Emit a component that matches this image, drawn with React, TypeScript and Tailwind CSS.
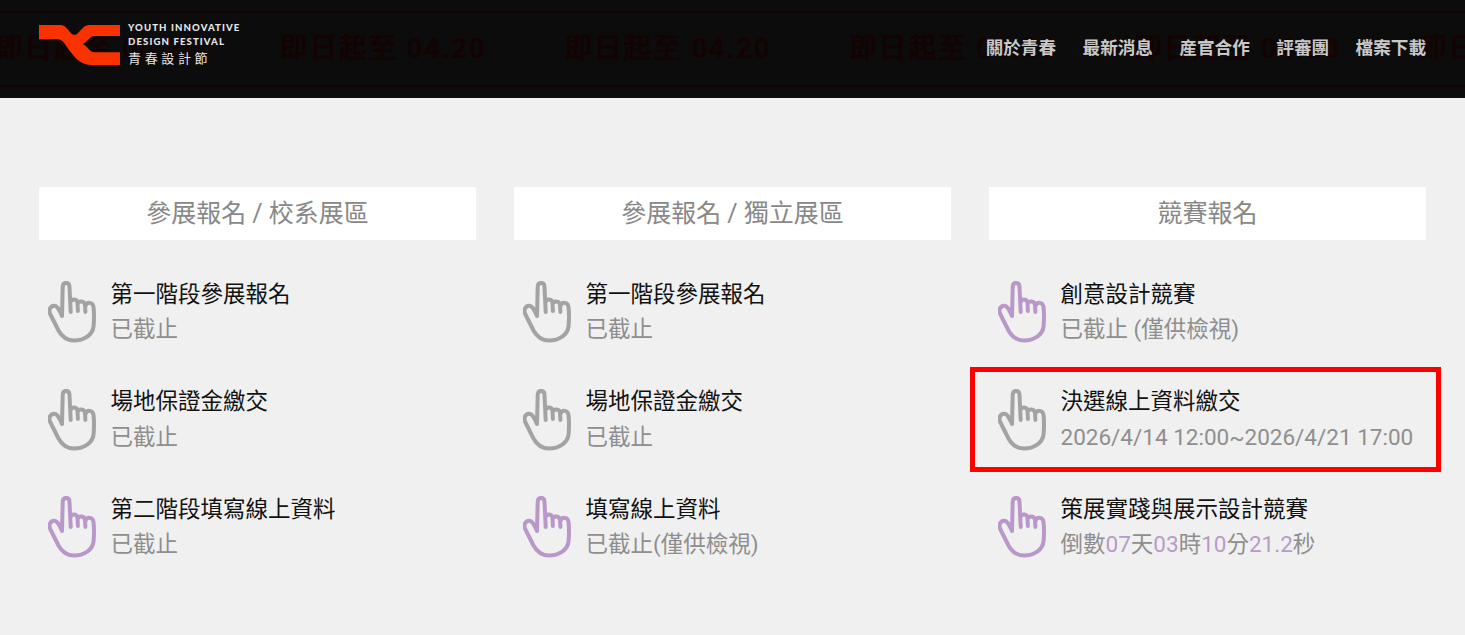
import type { ReactNode } from "react";

const FONT = "font-['Roboto','Noto_Sans_CJK_TC',sans-serif]";
const DEADLINE = "2026/4/14 12:00~2026/4/21 17:00";

const NAV_LINKS = ["關於青春", "最新消息", "産官合作", "評審團", "檔案下載"];

type Row = { title: string; sub: ReactNode; active?: boolean };

const Num = ({ children }: { children: ReactNode }) => (
  <span className="text-[#b79bc8]">{children}</span>
);

const COLUMNS: { heading: string; rows: Row[] }[] = [
  {
    heading: "參展報名 / 校系展區",
    rows: [
      { title: "第一階段參展報名", sub: "已截止" },
      { title: "場地保證金繳交", sub: "已截止" },
      { title: "第二階段填寫線上資料", sub: "已截止", active: true },
    ],
  },
  {
    heading: "參展報名 / 獨立展區",
    rows: [
      { title: "第一階段參展報名", sub: "已截止" },
      { title: "場地保證金繳交", sub: "已截止" },
      { title: "填寫線上資料", sub: "已截止(僅供檢視)", active: true },
    ],
  },
  {
    heading: "競賽報名",
    rows: [
      { title: "創意設計競賽", sub: "已截止 (僅供檢視)", active: true },
      { title: "決選線上資料繳交", sub: DEADLINE },
      {
        title: "策展實踐與展示設計競賽",
        sub: (
          <>
            倒數<Num>07</Num>天<Num>03</Num>時<Num>10</Num>分<Num>21.2</Num>秒
          </>
        ),
        active: true,
      },
    ],
  },
];

function HandIcon({ active }: { active?: boolean }) {
  return (
    <svg
      viewBox="0 0 48 62"
      className={`h-[62px] w-[48px] shrink-0 ${active ? "text-[#b998c9]" : "text-[#a3a3a3]"}`}
      fill="none"
      stroke="currentColor"
      strokeWidth="4"
      strokeLinecap="round"
      strokeLinejoin="round"
    >
      <path d="M14 35 L14.7 6 C14.9 0.5 21.3 0.5 21.5 6 L22.7 31 M22.7 21 C23.5 17.5 29 17.5 29.5 22 L29.9 30 M29.7 23 C30.5 19.5 36.5 19.5 37 24 L37.4 31 M37.3 25.5 C38.5 20.5 45 20.5 45.6 26.5 C46.2 33 46 40 45.6 45 C44.8 54 36 59.5 26 59.5 C18 59.5 13.5 55 10.5 49.5 L2.2 33 C0.3 28.5 2.5 25 6 24.7 C9 24.5 11 28 14 35" />
    </svg>
  );
}

function Logo() {
  return (
    <div className="flex items-start">
      <svg viewBox="0 0 81 41" className="mt-[24px] h-[41px] w-[81px] shrink-0">
        <path
          d="M0 1 H22 C28 1 31 11 35.5 11 C40 11 43 1 50 1 H81 V12 H56 C50 12 48 19 43.5 20 C48 21 50 28.3 56 28.3 H81 V41 H52 C40 41 33 30 28 23 C25 19 23 15.3 19 15.3 H0 Z"
          fill="#fa3200"
        />
      </svg>
      <div className="ml-[8px] mt-[21px] flex flex-col font-['Lato',sans-serif] text-[9.6px] font-black leading-[14px] tracking-[0.115em] text-[#e6e6e6]">
        <span>YOUTH INNOVATIVE</span>
        <span>DESIGN FESTIVAL</span>
        <span className="mt-[1px] font-['Noto_Sans_CJK_TC',sans-serif] text-[13px] font-normal leading-[16px] tracking-[0.28em]">
          青春設計節
        </span>
      </div>
    </div>
  );
}

function Header() {
  return (
    <header className="relative h-[98px] overflow-hidden bg-[#0c0c0d]">
      {/* marquee strip running behind the logo and nav */}
      <div className="absolute inset-x-0 top-[11px] flex h-[76px] items-center gap-[78px] whitespace-nowrap border-y-2 border-[#120303] text-[28px] font-bold leading-none tracking-[0.055em] text-[#130303]">
        {[0, 1, 2, 3, 4, 5].map((n) => (
          <span key={n} className={`shrink-0 ${n === 0 ? "-ml-[5px]" : ""}`}>
            即日起至 04.20
          </span>
        ))}
      </div>
      <div className="relative flex h-full items-start justify-between px-[39px]">
        <Logo />
        <nav className="mt-[35px] flex gap-[26.5px] text-[17.6px] font-bold leading-[26px] text-[#c8c8c8]">
          {NAV_LINKS.map((label) => (
            <a key={label} href="#">
              {label}
            </a>
          ))}
        </nav>
      </div>
    </header>
  );
}

export default function App() {
  return (
    <div className={`h-[635px] overflow-hidden bg-[#f0f0f0] ${FONT}`}>
      <Header />
      <main className="grid grid-cols-3 gap-[38px] px-[39px] pt-[89px]">
        {COLUMNS.map((col) => (
          <section key={col.heading}>
            <h2 className="flex h-[53px] items-center justify-center bg-white text-[25px] font-normal text-[#888888]">
              {col.heading}
            </h2>
            <ul className="mt-[36.5px] flex flex-col gap-[36.5px] pl-[9px]">
              {col.rows.map((row) => (
                <li key={row.title} className="relative flex items-center gap-[14.5px]">
                  <HandIcon active={row.active} />
                  <div className="flex flex-col whitespace-nowrap text-[22.5px] leading-[35.5px]">
                    <span className="text-[#111111]">{row.title}</span>
                    <span className="text-[#8e8e8e]">{row.sub}</span>
                  </div>
                  {row.sub === DEADLINE && (
                    <div className="absolute -left-[28px] -top-[17px] h-[105px] w-[471px] border-[5px] border-[#ff0000]" />
                  )}
                </li>
              ))}
            </ul>
          </section>
        ))}
      </main>
    </div>
  );
}
